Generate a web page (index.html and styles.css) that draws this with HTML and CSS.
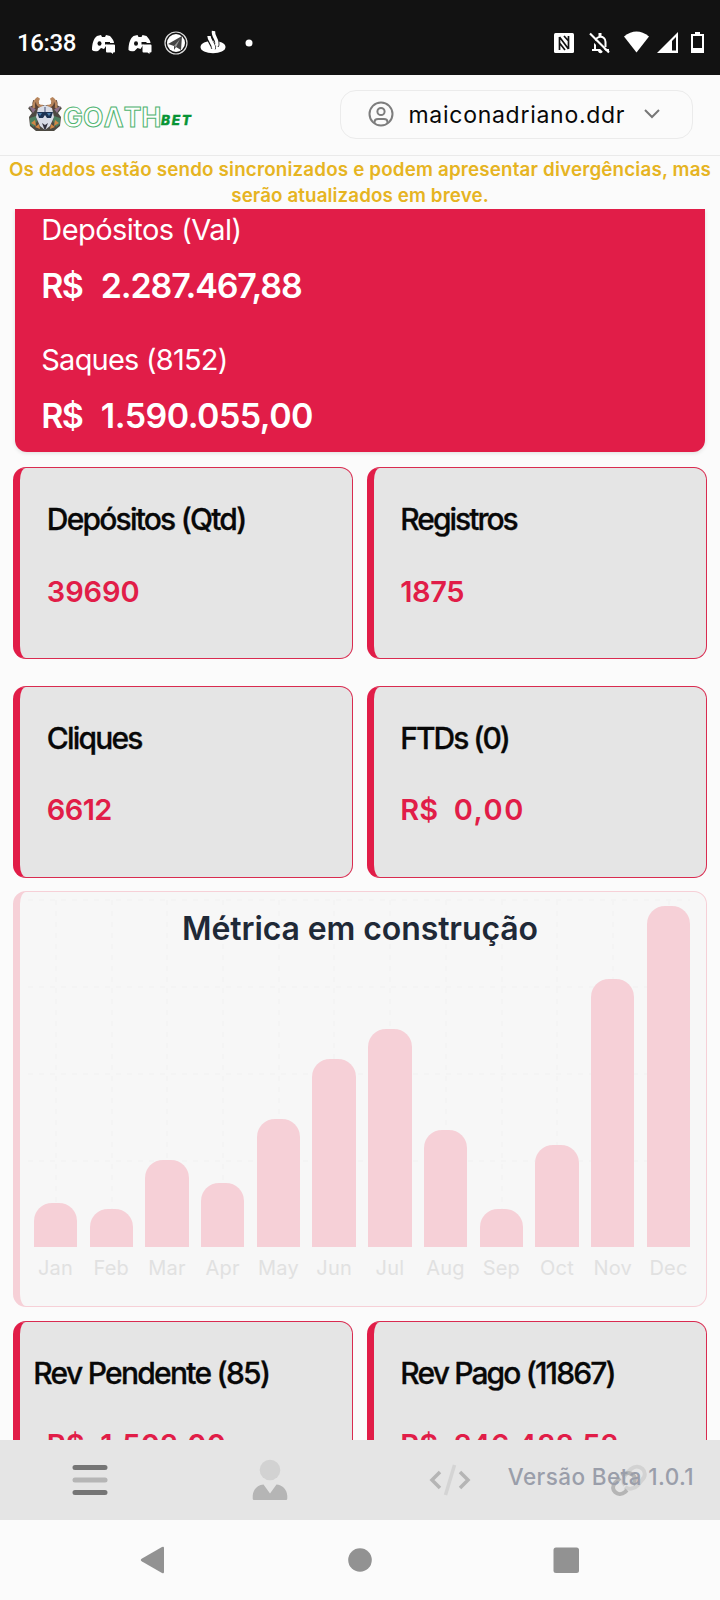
FILE: index.html
```html
<!DOCTYPE html>
<html lang="pt-BR">
<head>
<meta charset="utf-8">
<title>Goath Bet</title>
<link rel="stylesheet" href="styles.css">
</head>
<body>
<div class="status">
  <span class="time">16:38</span>
  <svg class="sys-left" width="170" height="30" viewBox="88 28 170 30" fill="#fff">
    <g id="discord"><path d="M92 50C92 43 94 38 97 36L101 35L102 37H105L106 35L110 36C112 38 114 41 114 43H108L106 46L104 49L101 48L98 51Q94 52 92 50Z"/><ellipse cx="99.500" cy="43.500" rx="2" ry="2.300" fill="#121212"/><path d="M105 42h5v2.500h-5z" fill="#121212"/><path d="M107 44.500h7q1 0 1 1v6q0 1-1 1h-1v1.500l-2-1.500h-4q-1 0-1-1v-6q0-1 1-1z"/></g>
    <use href="#discord" x="36.500"/>
    <circle cx="176" cy="43" r="11" fill="none" stroke="#ddd" stroke-width="1.200"/><circle cx="176" cy="43" r="9"/><path d="M168 44L182 36L181 50L176 47L174 50V46Z" fill="#444"/><path d="M174 46L180 39L176 47" fill="#999"/>
    <ellipse cx="213" cy="47" rx="12.500" ry="6.200"/><path d="M209 37C209 42 214 44 213.500 49M213.500 31C212.500 37 219 40 216.500 46" fill="none" stroke="#121212" stroke-width="5"/><path d="M209 36C209 41 214.500 44 213.500 49M213.500 31C212.500 37 219 40 216.500 46" fill="none" stroke="#fff" stroke-width="3.400"/>
    <circle cx="249" cy="43" r="3.500"/>
  </svg>
  <svg class="sys-right" width="156" height="30" viewBox="550 28 156 30" fill="#fff">
    <rect x="554" y="33" width="20" height="20" rx="1.500"/><path d="M559.500 37V50M559.500 37L568.500 49M568.500 36V49M564 36L568.500 41M559.500 43L565 50" fill="none" stroke="#121212" stroke-width="1.700"/>
    <path d="M592 50H609M595 50V43C595 35 605.500 35 605.500 42V47" fill="none" stroke="#fff" stroke-width="2"/><path d="M598.500 33h3v4h-3zM598 51h5c-1 3-4 3-5 0z"/><path d="M588.500 35.500L607.500 54.500" stroke="#121212" stroke-width="2.500"/><path d="M590 33.500L609 52.500" stroke="#fff" stroke-width="2.200"/>
    <path d="M624 36.500Q636.500 26.500 649 36.500L636.500 52.500Z"/>
    <path d="M657 53L678 32V53Z"/><path d="M672 41L676 37V50.500H672Z" fill="#121212"/>
    <path d="M691 34h4v-2h5v2h4v19h-13z"/><path d="M693 36h9v12h-9z" fill="#121212"/>
  </svg>
</div>

<header class="header">
  <div class="logo">
    <svg width="36" height="38" viewBox="0 0 36 38">
      <path d="M6 9L1 12L5 17L2 21L3 30L9 35H27L33 30L34 21L31 17L35 12L30 9Z" fill="#4d4a42"/>
      <path d="M2 10l7 3-3 4zM34 10l-7 3 3 4z" fill="#8c7088"/>
      <path d="M3 22l6-2 1 5-3 6-4-3zM33 22l-6-2-1 5 3 6 4-3z" fill="#4d8060"/>
      <path d="M4 27l4-3 1 6zM32 27l-4-3-1 6zM8 31l4-3 1 5zM28 31l-4-3-1 5z" fill="#d18745"/>
      <path d="M17 12C12 13 7 10 9 5M19 12C24 13 29 10 27 5" fill="none" stroke="#594134" stroke-width="6"/>
      <path d="M16 10C10 11 9 6 12 2M20 10C26 11 27 6 24 2M7 12C6 8 8 4 11 2M29 12C30 8 28 4 25 2" fill="none" stroke="#b7855c" stroke-width="2.600"/>
      <path d="M11 12l7-3 7 3 2 9-4 9-5 4-5-4-4-9z" fill="#d8dce6"/>
      <path d="M10 16h16l-2 6h-4l-2-3-2 3h-4z" fill="#1c3352"/><path d="M11 17h4l-2 3zM20 17h4l-2 3z" fill="#4d7fad"/>
      <path d="M15 27l3 2 3-2-3 8z" fill="#34343f"/><path d="M17 11h2v5h-2z" fill="#8e95ad"/>
    </svg>
    <span class="goath">GOΛTH</span><span class="bet">BET</span>
  </div>
  <div class="account">
    <svg width="26" height="26" viewBox="0 0 26 26" fill="none" stroke="#7d7d7d" stroke-width="2"><circle cx="13" cy="13" r="11.500"/><circle cx="13" cy="10.500" r="3.600"/><path d="M6.500 22V21C6.500 19 8 18 10 18H16C18 18 19.500 19 19.500 21V22"/></svg>
    <span class="user">maiconadriano.ddr</span>
    <svg class="chev" width="18" height="12" viewBox="0 0 18 12" fill="none" stroke="#777" stroke-width="2"><path d="M2 2L9 9L16 2"/></svg>
  </div>
</header>

<p class="notice"><span class="n1">Os dados estão sendo sincronizados e podem apresentar divergências, mas</span><br><span class="n2">serão atualizados em breve.</span></p>

<main class="main">
  <section class="hero">
    <div class="label"><span class="h1">Depósitos (Val)</span></div>
    <div class="money"><span class="cur">R$</span><span class="h2">2.287.467,88</span></div>
    <div class="label second"><span class="h3">Saques (8152)</span></div>
    <div class="money"><span class="cur">R$</span><span class="h4">1.590.055,00</span></div>
  </section>
  <section class="row">
    <div class="card"><h2 class="t1">Depósitos (Qtd)</h2><div class="val v1">39690</div></div>
    <div class="card"><h2 class="t2">Registros</h2><div class="val v2">1875</div></div>
  </section>
  <section class="row gap-top">
    <div class="card"><h2 class="t3">Cliques</h2><div class="val v3">6612</div></div>
    <div class="card"><h2 class="t4">FTDs (0)</h2><div class="val v4"><span class="cur">R$</span><span class="amount">0,00</span></div></div>
  </section>
  <section class="chart">
    <svg class="grid" width="680" height="360" viewBox="0 0 680 360" fill="none" stroke="#f4f4f4" stroke-width="1.500" stroke-dasharray="5 6"><path d="M8 8H670M8 95H670M8 182H670M8 269H670M36 8V355M92 8V355M147 8V355M203 8V355M259 8V355M314 8V355M370 8V355M426 8V355M482 8V355M537 8V355M593 8V355M649 8V355"/></svg>
    <div class="bars">
      <div class="col"><i style="height:44px"></i><span>Jan</span></div>
      <div class="col"><i style="height:38px"></i><span>Feb</span></div>
      <div class="col"><i style="height:87px"></i><span>Mar</span></div>
      <div class="col"><i style="height:64px"></i><span>Apr</span></div>
      <div class="col"><i style="height:128px"></i><span>May</span></div>
      <div class="col"><i style="height:188px"></i><span>Jun</span></div>
      <div class="col"><i style="height:218px"></i><span>Jul</span></div>
      <div class="col"><i style="height:117px"></i><span>Aug</span></div>
      <div class="col"><i style="height:38.500px"></i><span>Sep</span></div>
      <div class="col"><i style="height:102px"></i><span>Oct</span></div>
      <div class="col"><i style="height:268px"></i><span>Nov</span></div>
      <div class="col"><i style="height:341px"></i><span>Dec</span></div>
    </div>
    <div class="chart-title"><span>Métrica em construção</span></div>
  </section>
  <section class="row last">
    <div class="card"><h2 class="t5">Rev Pendente (85)</h2><div class="val v5"><span class="cur">R$</span><span class="amount">1.502,00</span></div></div>
    <div class="card"><h2 class="t6">Rev Pago (11867)</h2><div class="val v6"><span class="cur">R$</span><span class="amount">246.488,52</span></div></div>
  </section>
</main>

<nav class="tabs">
  <div class="tab"><svg width="40" height="44" viewBox="0 0 40 44" stroke-width="5" stroke-linecap="round"><path d="M5 9.500H35M5 34.500H35" stroke="#757575"/><path d="M5 22H35" stroke="#b5b5b5"/></svg></div>
  <div class="tab"><svg width="40" height="44" viewBox="0 0 40 44"><circle cx="20" cy="12" r="10.300" fill="#d2d2d2"/><path d="M2.700 40.500V38C3 31 8 27 13.500 26.500L20 35.500L26.500 26.500C32 27 37 31 37.300 38V40.500Q37.300 42 36 42H4Q2.700 42 2.700 40.500Z" fill="#b5b5b5"/></svg></div>
  <div class="tab"><svg width="44" height="44" viewBox="0 0 44 44" fill="none"><path d="M12 14L4 22L12 30M32 14L40 22L32 30" stroke="#b5b5b5" stroke-width="3.500"/><path d="M26.500 7L17.500 37" stroke="#d4d4d4" stroke-width="3.500"/></svg></div>
  <div class="tab"><svg width="44" height="44" viewBox="0 0 44 44" fill="none" stroke-width="4"><path d="M17 27C14 24 15 20 18 16L23 11C31 4 42 14 34 22L30 27C26 31 21 32 17 29" stroke="#d2d2d2"/><path d="M12 20L7 25C1 31 10 40 17 34L19 32M14 18C19 13 25 15 27 20Q27 24 25 27" stroke="#b5b5b5"/></svg></div>
  <span class="version">Versão Beta 1.0.1</span>
</nav>
<div class="android">
  <svg width="720" height="80" viewBox="0 0 720 80" fill="#929292"><path d="M142 38.500L162 27Q164 26 164 28V52Q164 54 162 53L142 41.500Q139.500 40 142 38.500Z"/><circle cx="360" cy="40" r="11.800"/><rect x="553.500" y="27.500" width="25.500" height="25.500" rx="2.500"/></svg>
</div>
</body>
</html>
```
FILE: styles.css
```css
* { box-sizing: border-box; }
body { margin: 0; width: 720px; height: 1600px; overflow: hidden; display: flex; flex-direction: column; background: #fbfbfb; font-family: Inter, "Liberation Sans", sans-serif; color: #080808; }
svg { display: block; flex: none; }
span { white-space: pre; }
.status { height: 74.500px; flex: none; background: #121212; color: #fff; display: flex; padding: 28px 14px 0 17px; }
.time { font: 500 24px/30px Roboto, sans-serif; width: 71px; letter-spacing: -.4px; }
.sys-right { margin-left: auto; }
.header { height: 81.500px; flex: none; border-bottom: 1.500px solid #eaeaea; display: flex; justify-content: space-between; align-items: flex-start; padding: 15px 27px 0 27px; }
.logo { display: flex; align-items: flex-start; padding-top: 6px; }
.goath { font-size: 26.500px; font-weight: 700; line-height: 42px; color: #fdfefd; -webkit-text-stroke: 1px #4db36f; margin-left: 0; width: 98px; letter-spacing: .2px; }
.bet { font-size: 13.500px; font-weight: 800; font-style: italic; color: #079434; line-height: 20px; margin-top: 14px; letter-spacing: 1.700px; -webkit-text-stroke: .4px #079434; }
.account { width: 353px; height: 49px; border: 1.500px solid #ebebeb; border-radius: 16px; display: flex; align-items: center; padding-left: 27px; }
.user { font-size: 23px; letter-spacing: .72px; margin-left: 14.500px; width: 215px; line-height: 40px; padding-top: 1px; }
.chev { margin-left: 19px; }
.notice { margin: 0; height: 53px; flex: none; text-align: center; font-size: 18.800px; font-weight: 600; line-height: 26.500px; color: #e6b422; padding-top: .8px; }
.n1 { letter-spacing: .17px; }
.n2 { letter-spacing: .1px; }
.main { flex: 1; min-height: 0; overflow: hidden; padding: 0 13.300px; }
.hero { height: 243px; margin: 0 1.500px; background: #e11d48; color: #fff; border-radius: 0 0 12px 12px; padding: .5px 0 0 26.500px; box-shadow: 0 1px 4px rgba(0,0,0,.12); }
.label, .money { height: 40px; line-height: 40px; font-size: 29px; }
.money { margin-top: 16px; font-size: 34px; font-weight: 600; }
.label.second { margin-top: 34px; }
.cur { display: inline-block; }
.money .cur { width: 59.500px; letter-spacing: -1.700px; }
.h1 { letter-spacing: -.55px; }
.h2 { letter-spacing: -1.130px; }
.h3 { letter-spacing: -.78px; }
.h4 { letter-spacing: -.53px; }
.row { display: grid; grid-template-columns: 1fr 1fr; gap: 13.500px; margin-top: 15px; }
.row.gap-top { margin-top: 26.500px; }
.row.last { margin-top: 13.500px; }
.card { height: 192px; background: #e5e5e5; border: 1.400px solid #d92b50; border-left: 7px solid #e11d48; border-radius: 13px; padding: 31px 0 0 26.500px; }
.card h2 { margin: 0; font-size: 30px; line-height: 40px; font-weight: 500; white-space: pre; -webkit-text-stroke: .3px #080808; letter-spacing: -1.850px; }
.card .t1 { letter-spacing: -1.800px; }
.card .t2 { letter-spacing: -2px; }
.card .t3 { letter-spacing: -1.800px; }
.card .t4 { letter-spacing: -2px; }
.card .t5 { letter-spacing: -1.730px; margin-left: -13.500px; }
.val { font-size: 29px; line-height: 40px; margin-top: 32.500px; font-weight: 600; color: #e11d48; }
.val .cur { width: 53.500px; }
.v1 { letter-spacing: -.1px; }
.v2 { letter-spacing: -.4px; }
.v3 { letter-spacing: -.6px; }
.v4 .amount { letter-spacing: 1.500px; }
.v5 .amount { letter-spacing: .3px; }
.chart { position: relative; height: 416px; margin-top: 13.500px; background: #f7f7f7; border: 1.400px solid #f6d0d7; border-left: 7px solid #f6d0d7; border-radius: 13px; padding-top: 14px; }
.grid { position: absolute; left: 0; top: 0; }
.bars { position: relative; display: grid; grid-template-columns: repeat(12, 55.730px); height: 386px; padding-left: 7.400px; }
.col { display: flex; flex-direction: column; align-items: center; justify-content: flex-end; }
.col i { width: 43.300px; background: #f6d0d7; border-radius: 18px 18px 0 0; }
.col span { height: 45px; line-height: 41px; padding-top: 1px; font-size: 20px; font-weight: 400; letter-spacing: .2px; color: #e1e1e1; }
.chart-title { position: absolute; left: -6px; right: 0; top: 17px; text-align: center; font-size: 32px; line-height: 40px; font-weight: 600; letter-spacing: -.1px; color: #1f2937; }
.tabs { position: relative; height: 80px; flex: none; background: #e5e5e5; display: grid; grid-template-columns: repeat(4, 1fr); }
.tab { display: flex; justify-content: center; padding-top: 18px; }
.version { position: absolute; right: 26px; top: 17px; line-height: 40px; font-size: 22.500px; font-weight: 500; color: #9a9eaa; letter-spacing: .4px; }
.android { height: 80px; flex: none; }
```
